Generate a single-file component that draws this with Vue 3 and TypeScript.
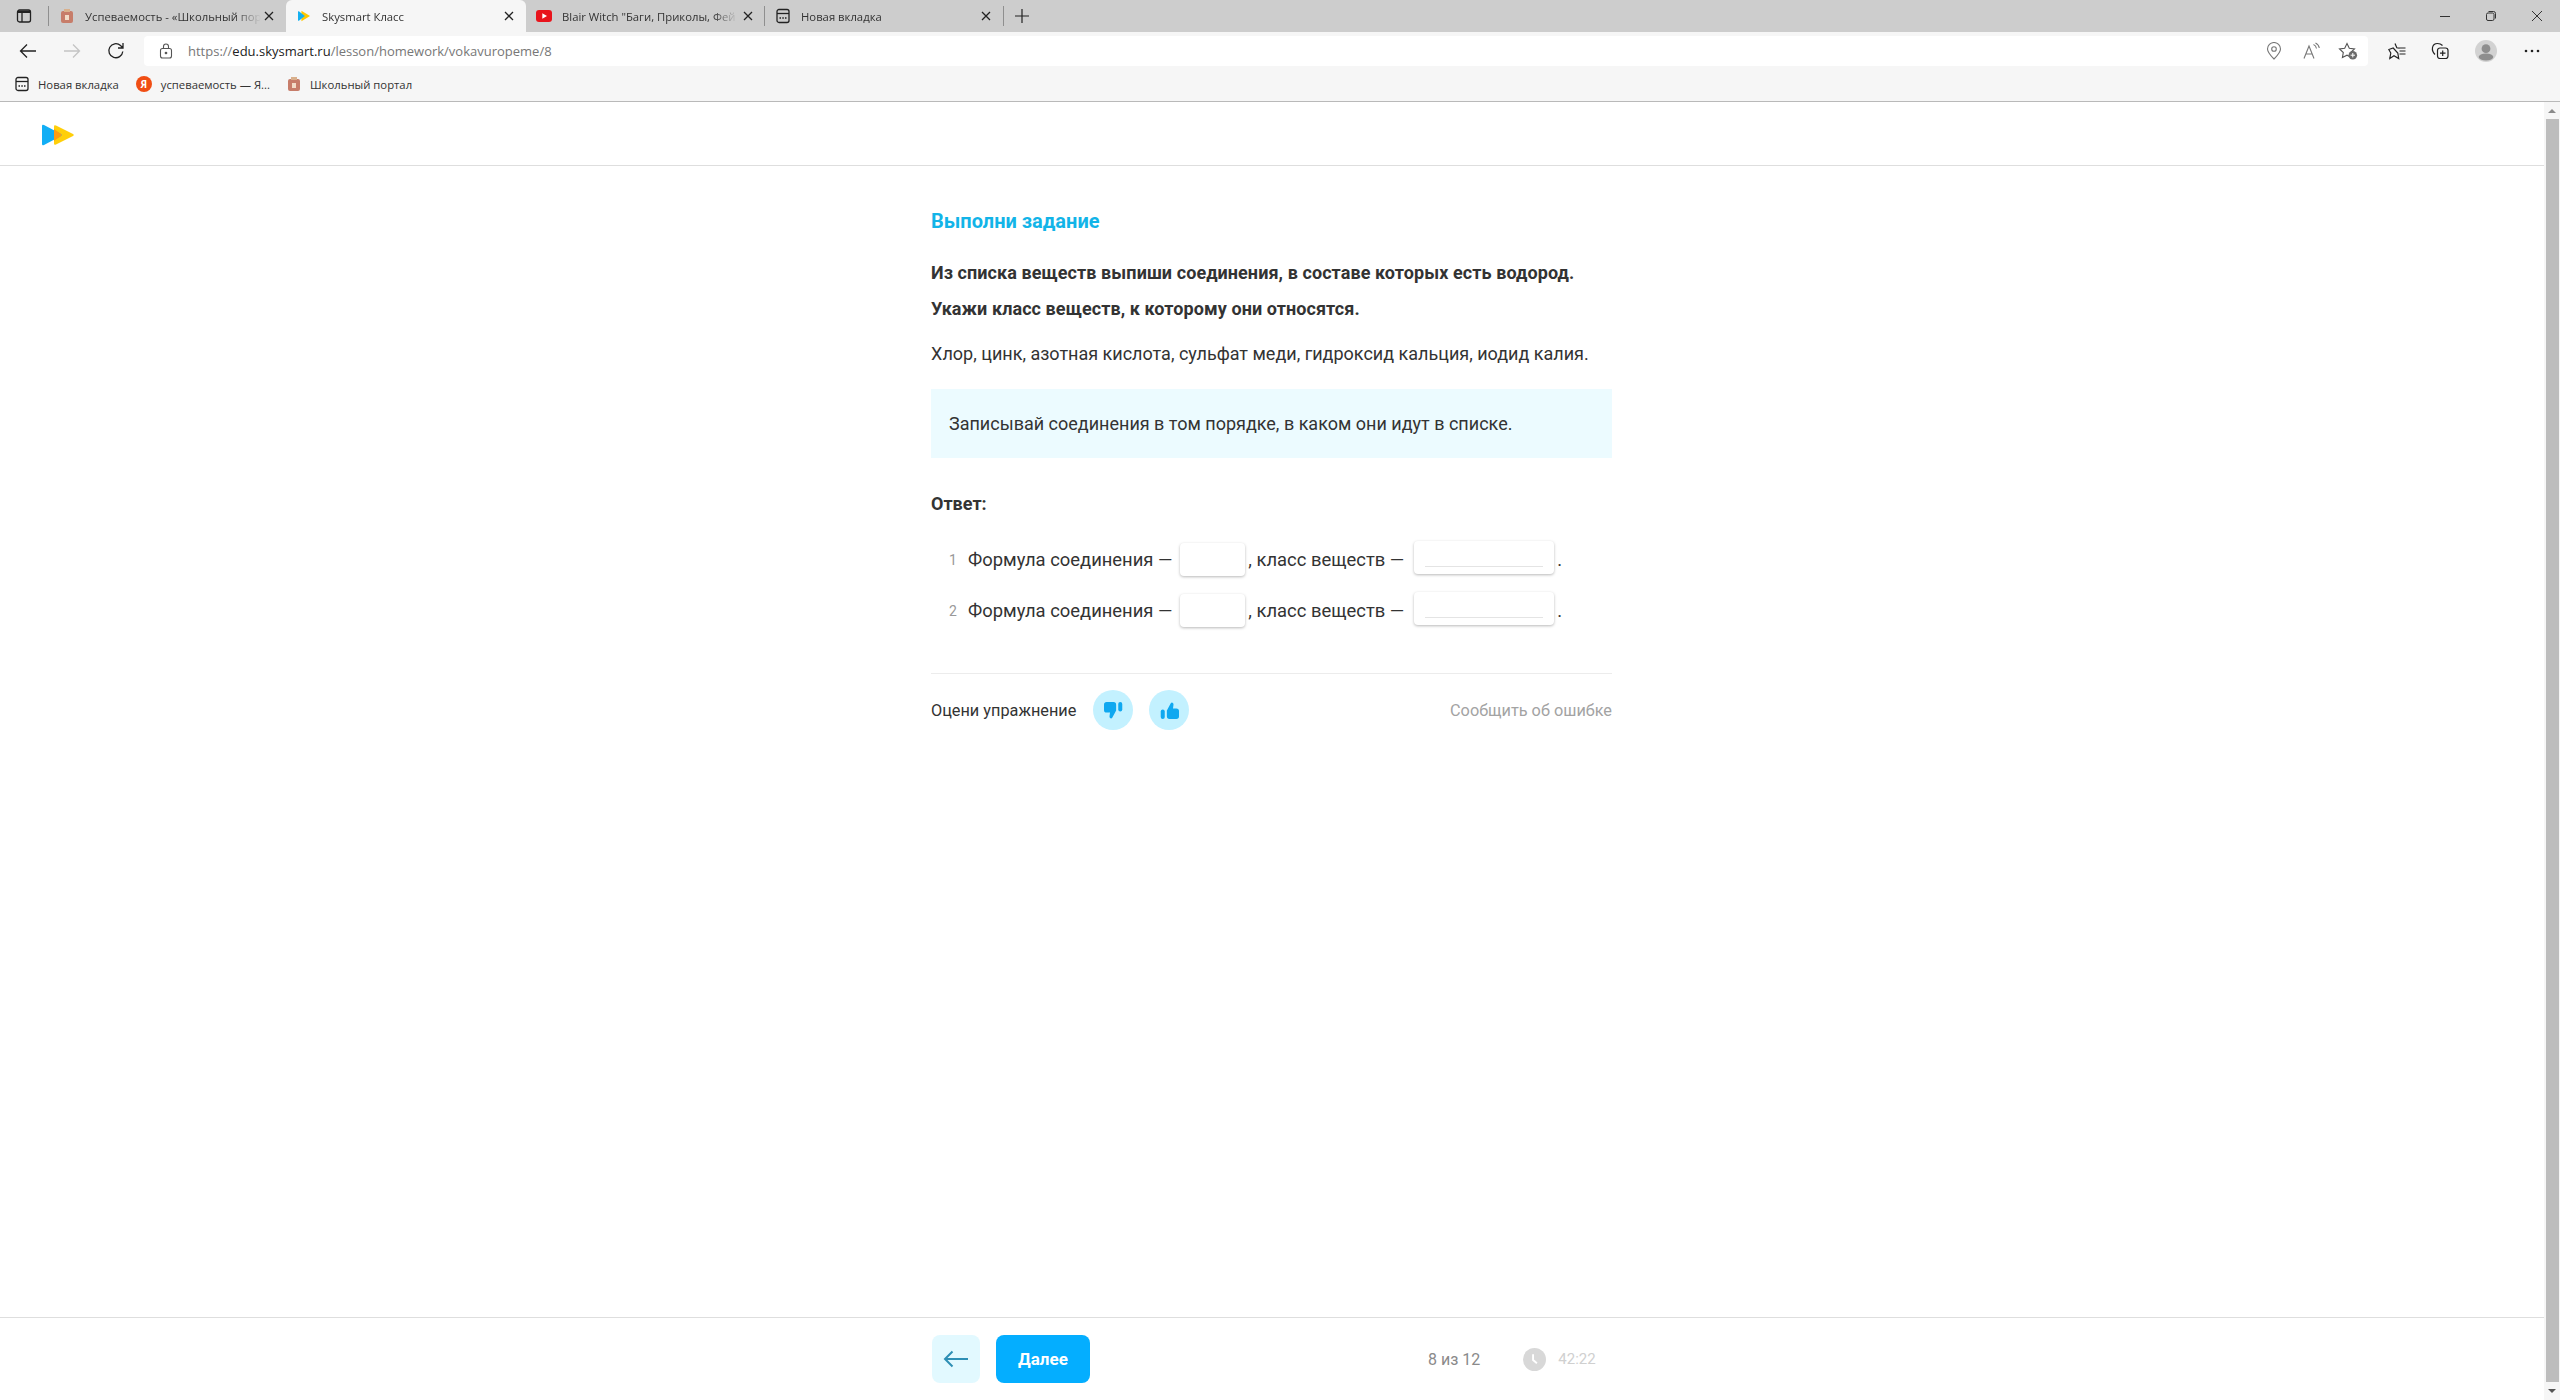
<script setup lang="ts">
interface Tab { title: string; icon: string; active?: boolean; width: number; sep?: boolean }
const tabs: Tab[] = [
  { title: 'Успеваемость - «Школьный пор', icon: 'portal', width: 237 },
  { title: 'Skysmart Класс', icon: 'sky', active: true, width: 240 },
  { title: 'Blair Witch "Баги, Приколы, Фей', icon: 'yt', width: 239, sep: true },
  { title: 'Новая вкладка', icon: 'new', width: 238 },
]
const rows = [1, 2]
</script>

<template>
  <div class="page">
    <div class="tabbar">
      <svg class="tabs-ico" width="16" height="16" viewBox="0 0 16 16" fill="none" stroke="#222" stroke-width="1.3"><rect x="1.500" y="2" width="13" height="12" rx="2"/><path d="M6 5v9"/><path d="M2 2.600h12v2.400H2z" fill="#222" stroke="none"/></svg>
      <span class="tab-sep"></span>
      <div v-for="t in tabs" :key="t.title" class="tab" :class="{ active: t.active, 'sep-r': t.sep }" :style="{ width: t.width + 'px' }">
        <span class="fav">
          <svg v-if="t.icon === 'portal'" width="12" height="16" viewBox="0 0 12 16"><rect x="0" y="3" width="12" height="12" rx="2" fill="#c77d6a"/><rect x="3" y="1" width="6" height="3" fill="#d9b08c"/><rect x="4" y="7" width="4" height="5" fill="#f2dcc8"/></svg>
          <svg v-else-if="t.icon === 'sky'" width="14" height="12" viewBox="0 0 16 14"><path d="M5 1l10 6-10 6z" fill="#ffc800"/><path d="M1 2q0-1 1-.5L9 7l-7 5.500q-1 .5-1-.5z" fill="#15b0f0"/></svg>
          <svg v-else-if="t.icon === 'yt'" width="16" height="16" viewBox="0 0 16 16"><rect x="0" y="2" width="16" height="12" rx="3" fill="#e8141c"/><path d="M6.300 5.300L11 8l-4.700 2.700z" fill="#fff"/></svg>
          <svg v-else width="14" height="16" viewBox="0 0 14 16" fill="none" stroke="#222" stroke-width="1.300"><rect x="1" y="1.500" width="12" height="13" rx="2"/><path d="M1 5.500h12"/><path d="M3.500 10h1.500M6.300 10h1.500M9 10h1.500" stroke-width="1.500"/></svg>
        </span>
        <span class="tab-title">{{ t.title }}</span>
        <svg class="tab-x" width="10" height="10" viewBox="0 0 10 10" stroke="#222" stroke-width="1.300"><path d="M1 1l8 8M9 1l-8 8"/></svg>
      </div>
      <span class="tab-sep plus-sep"></span>
      <svg class="plus" width="14" height="14" viewBox="0 0 14 14" stroke="#222" stroke-width="1.200"><path d="M7 0v14M0 7h14"/></svg>
      <div class="win">
        <svg width="12" height="12" viewBox="0 0 12 12" stroke="#333"><path d="M1 6.500h10"/></svg>
        <svg width="12" height="12" viewBox="0 0 12 12" fill="none" stroke="#333"><rect x="1.500" y="3" width="7.500" height="7.500" rx="1.500"/><path d="M3.500 1.500h5a2 2 0 0 1 2 2v5"/></svg>
        <svg width="12" height="12" viewBox="0 0 12 12" stroke="#333"><path d="M1 1l10 10M11 1L1 11"/></svg>
      </div>
    </div>

    <div class="toolbar">
      <svg class="nav-ico" width="18" height="18" viewBox="0 0 18 18" fill="none" stroke="#222" stroke-width="1.300"><path d="M17 9H1.500M8 2.500L1.500 9 8 15.500"/></svg>
      <svg class="nav-ico" width="18" height="18" viewBox="0 0 18 18" fill="none" stroke="#c4c4c4" stroke-width="1.300"><path d="M1 9h15.500M10 2.500L16.500 9 10 15.500"/></svg>
      <svg class="nav-ico" width="18" height="18" viewBox="0 0 18 18" fill="none" stroke="#222" stroke-width="1.300"><path d="M15.800 9.500A7 7 0 1 1 13.500 3.500L16 6M16 1v5h-5"/></svg>
      <div class="address">
        <svg class="lock" width="14" height="16" viewBox="0 0 14 16" fill="none" stroke="#555" stroke-width="1.100"><rect x="1.500" y="5.500" width="11" height="9.500" rx="2"/><path d="M4.500 5.500V3.500a2.500 2.500 0 0 1 5 0v2"/><circle cx="7" cy="10" r=".8" fill="#555"/></svg>
        <span class="url"><span class="dim">https://</span>edu.skysmart.ru<span class="dim">/lesson/homework/vokavuropeme/8</span></span>
        <div class="addr-icons">
          <svg width="16" height="18" viewBox="0 0 16 18" fill="none" stroke="#777" stroke-width="1.100"><path d="M8 17C4 13 1.500 10 1.500 7a6.500 6.500 0 0 1 13 0c0 3-2.500 6-6.500 10z"/><circle cx="8" cy="7" r="2.300"/></svg>
          <svg class="read" width="18" height="18" viewBox="0 0 18 18" fill="none" stroke="#777" stroke-width="1.100"><path d="M1 16.500L6 4l5 12.500M2.800 12h6.400M10.500 2.500q2.500 1 3 4M12.500 1q3.200 1.500 3.800 5"/></svg>
          <svg class="star-add" width="20" height="18" viewBox="0 0 20 18"><path d="M9 1.500l2.300 4.700 5.200.7-3.800 3.600.9 5.100L9 13.200l-4.600 2.400.9-5.100-3.800-3.600 5.200-.7z" fill="none" stroke="#555" stroke-width="1.100"/><circle cx="14.800" cy="13.200" r="4.300" fill="#6b6b6b"/><path d="M14.800 11v4.400M12.600 13.200H17" stroke="#fff"/></svg>
        </div>
      </div>
      <div class="tool-icons">
        <svg width="18" height="18" viewBox="0 0 18 18" fill="none" stroke="#222" stroke-width="1.200"><path d="M7 1.500l1.800 4.300 2.700.3M9.800 11l.9 5.500L6 13.800 1.800 16.500l1-5.500L.8 7.500 5.200 6zM11.500 6h6M11.500 9h6M11.500 12h6"/></svg>
        <svg class="coll" width="18" height="18" viewBox="0 0 18 18" fill="none" stroke="#222" stroke-width="1.200"><rect x="6.500" y="6" width="10.500" height="10.500" rx="2.500"/><path d="M11.700 8.500v5.500M9 11.200h5.500M4 12.500C2 10.500 1 8.500 1.500 5.500 2 3 4 1.500 6.500 1.500c2 0 3.500.5 5 2"/></svg>
        <svg class="prof" width="22" height="22" viewBox="0 0 24 24"><circle cx="12" cy="12" r="12" fill="#d2d2d2"/><circle cx="12" cy="9.500" r="4.800" fill="#8e8e8e"/><ellipse cx="12" cy="18.500" rx="8" ry="3.900" fill="#8e8e8e"/></svg>
        <svg class="dots" width="16" height="4" viewBox="0 0 16 4" fill="#222"><circle cx="2" cy="2" r="1.300"/><circle cx="8" cy="2" r="1.300"/><circle cx="14" cy="2" r="1.300"/></svg>
      </div>
    </div>

    <div class="bookmarks">
      <div class="bm">
        <svg width="14" height="16" viewBox="0 0 14 16" fill="none" stroke="#222" stroke-width="1.300"><rect x="1" y="1.500" width="12" height="13" rx="2"/><path d="M1 5.500h12"/><path d="M3.500 10h1.500M6.300 10h1.500M9 10h1.500" stroke-width="1.500"/></svg>
        <span>Новая вкладка</span>
      </div>
      <div class="bm">
        <span class="ya">Я</span>
        <span>успеваемость — Я...</span>
      </div>
      <div class="bm">
        <svg width="14" height="16" viewBox="0 0 14 16"><rect x="1" y="3" width="12" height="12" rx="2" fill="#c77d6a"/><rect x="4" y="1" width="6" height="3" fill="#d9b08c"/><rect x="5" y="7" width="4" height="5" fill="#f2dcc8"/></svg>
        <span>Школьный портал</span>
      </div>
    </div>

    <div class="viewport">
      <div class="content-col">
        <header class="site-head">
          <svg width="32" height="22" viewBox="0 0 32 22">
            <path d="M12 2.500q0-2 2-1L31 10q1.500 1 0 2L14 20.500q-2 1-2-1z" fill="#ffcf0a"/>
            <path d="M0 2q0-2 2-1l17 9q1.500 1 0 2L2 21q-2 1-2-1z" fill="#12aef5"/>
            <path d="M12 5l7 5q1.500 1 0 2l-7 5z" fill="#ff9c12"/>
          </svg>
        </header>

        <main class="main">
          <div class="lesson">
            <h2 class="title">Выполни задание</h2>
            <p class="strong first">Из списка веществ выпиши соединения, в составе которых есть водород.</p>
            <p class="strong second">Укажи класс веществ, к которому они относятся.</p>
            <p class="list">Хлор, цинк, азотная кислота, сульфат меди, гидроксид кальция, иодид калия.</p>
            <div class="note">Записывай соединения в том порядке, в каком они идут в списке.</div>
            <div class="answer-label">Ответ:</div>
            <ol class="answers">
              <li v-for="n in rows" :key="n" class="answer">
                <span class="num">{{ n }}</span>
                <span>Формула соединения —</span>
                <span class="inp small"></span>
                <span class="after">, класс веществ —</span>
                <span class="inp big"><span class="line"></span></span>
                <span class="dot">.</span>
              </li>
            </ol>
            <div class="rate">
              <span class="rate-label">Оцени упражнение</span>
              <span class="circle">
                <svg width="19" height="19" viewBox="0 0 18 18" fill="#0fa8f0"><path d="M0 3.500A2.500 2.500 0 0 1 2.500 1H9a2.500 2.500 0 0 1 2.500 2.500v5.500L7.800 15.800q-.6 1-1.700.6-1-.5-.9-1.700L5.700 11H2.500A2.500 2.500 0 0 1 0 8.500z"/><rect x="13.500" y="1" width="3.800" height="9" rx="1.900"/></svg>
              </span>
              <span class="circle second-c">
                <svg width="19" height="19" viewBox="0 0 18 18" fill="#0fa8f0"><path d="M18 14.500a2.500 2.500 0 0 1-2.500 2.500H9a2.500 2.500 0 0 1-2.500-2.500V9L10.200 2.200q.6-1 1.700-.6 1 .5.900 1.700L12.300 7h3.200A2.500 2.500 0 0 1 18 9.500z"/><rect x=".7" y="8" width="3.800" height="9" rx="1.900"/></svg>
              </span>
              <span class="report">Сообщить об ошибке</span>
            </div>
          </div>
        </main>

        <footer class="foot">
          <div class="foot-inner">
            <button class="back">
              <svg width="26" height="18" viewBox="0 0 26 18" fill="none" stroke="#2e8fb5" stroke-width="2"><path d="M25 9H2M9.500 1.500L2 9l7.500 7.500"/></svg>
            </button>
            <button class="next">Далее</button>
            <span class="count">8 из 12</span>
            <svg class="clock" width="23" height="23" viewBox="0 0 24 24"><circle cx="12" cy="12" r="12" fill="#d8d8d8"/><path d="M10.500 6.500v6l4 3.500" fill="none" stroke="#fff" stroke-width="2"/></svg>
            <span class="timer">42:22</span>
          </div>
        </footer>
      </div>

      <div class="scrollbar">
        <span class="arrow up"></span>
        <span class="thumb"></span>
        <span class="arrow down"></span>
      </div>
    </div>
  </div>
</template>

<style scoped>
.page { width: 2560px; height: 1400px; display: flex; flex-direction: column; overflow: hidden; background: #fff; font-family: "Open Sans", "Noto Sans", sans-serif; color: #222; }
.tabbar { height: 32px; background: #cdcdcd; display: flex; align-items: center; font-size: 11.3px; flex: none; }
.tabs-ico { margin-left: 16px; }
.tab-sep { width: 1px; height: 20px; background: #8f8f8f; margin-left: 16px; flex: none; }
.tab { height: 32px; display: flex; align-items: center; padding: 0 12px 0 10px; box-sizing: border-box; position: relative; color: #444; flex: none; }
.tab.active { background: #f6f6f6; border-radius: 6px 6px 0 0; }
.tab.sep-r::after { content: ""; position: absolute; right: 0; top: 6px; height: 20px; width: 1px; background: #8f8f8f; }
.fav { width: 16px; height: 16px; display: flex; align-items: center; justify-content: center; margin-right: 10px; flex: none; }
.tab-title { flex: 1; white-space: nowrap; color: #333; -webkit-mask-image: linear-gradient(to right, #000 150px, transparent 176px); mask-image: linear-gradient(to right, #000 150px, transparent 176px); }
.tab-x { flex: none; }
.plus-sep { margin-left: 0; }
.plus { margin-left: 11px; }
.win { margin-left: auto; display: flex; gap: 34px; padding-right: 17px; align-items: center; }
.toolbar { height: 37px; background: #f6f6f6; display: flex; align-items: center; flex: none; }
.nav-ico { margin-left: 26px; flex: none; }
.nav-ico:first-child { margin-left: 19px; }
.address { margin-left: 19px; width: 2224px; height: 30px; background: #fff; border-radius: 4px; display: flex; align-items: center; box-sizing: border-box; padding-left: 15px; flex: none; }
.url { margin-left: 15px; font-size: 13px; color: #222; }
.dim { color: #777; }
.addr-icons { margin-left: auto; display: flex; align-items: center; padding-right: 10px; }
.read { margin-left: 21px; }
.star-add { margin-left: 17px; }
.tool-icons { display: flex; align-items: center; margin-left: 20px; }
.coll { margin-left: 25px; }
.prof { margin-left: 26px; }
.dots { margin-left: 27px; }
.bookmarks { height: 33px; box-sizing: border-box; background: #f6f6f6; display: flex; align-items: center; padding: 0 0 2px 15px; gap: 17px; font-size: 11.3px; border-bottom: 1px solid #b9b9b9; flex: none; color: #333; }
.bm { display: flex; align-items: center; gap: 9px; }
.ya { width: 16px; height: 16px; border-radius: 50%; background: #f04e14; color: #fff; font-size: 10px; font-weight: 700; display: flex; align-items: center; justify-content: center; }
.viewport { flex: 1; display: flex; min-height: 0; }
.content-col { flex: 1; display: flex; flex-direction: column; min-width: 0; }
.site-head { height: 64px; box-sizing: border-box; border-bottom: 1px solid #dedede; display: flex; align-items: center; padding: 2px 0 0 42px; flex: none; }
.main { flex: 1; display: flex; justify-content: center; min-height: 0; }
.lesson { width: 681px; margin-left: -1px; font-family: Roboto, "Noto Sans", sans-serif; font-size: 18px; }
.title { margin: 42px 0 0; font-size: 20px; line-height: 26px; font-weight: 700; color: #12b4e8; }
.strong { margin: 0; font-weight: 700; color: #333; line-height: 26px; letter-spacing: .08px; }
.first { margin-top: 26px; }
.second { margin-top: 10px; }
.list { margin: 19px 0 0; line-height: 26px; color: #333; }
.note { margin-top: 22px; height: 69px; background: #ecfbff; display: flex; align-items: center; padding: 0 0 1px 18px; box-sizing: border-box; color: #333; }
.answer-label { margin-top: 33px; font-weight: 700; line-height: 26px; color: #333; }
.answers { list-style: none; margin: 26px 0 0; padding: 0; display: flex; flex-direction: column; gap: 18px; }
.answer { display: flex; align-items: center; height: 33px; color: #333; white-space: pre; font-size: 18.4px; }
.num { width: 20px; text-align: center; margin-left: 12px; margin-right: 5px; color: #999; font-size: 14px; }
.inp { display: block; background: #fff; border-radius: 4px; box-shadow: 0 1px 3px rgba(0,0,0,.28); box-sizing: border-box; position: relative; }
.small { width: 65px; height: 33px; margin-left: 8px; }
.big { width: 140px; height: 33px; margin-left: 10px; margin-bottom: 4px; }
.line { position: absolute; left: 11px; right: 11px; bottom: 7px; height: 1px; background: #e4e4e4; }
.after { margin-left: 3px; }
.dot { margin-left: 3px; }
.rate { margin-top: 46px; border-top: 1px solid #ececec; padding-top: 16px; display: flex; align-items: center; height: 40px; }
.rate-label { font-size: 16.3px; color: #333; }
.circle { width: 40px; height: 40px; border-radius: 50%; background: #c3f1ff; display: flex; align-items: center; justify-content: center; margin-left: 17px; }
.second-c { margin-left: 16px; }
.report { margin-left: auto; font-size: 16.3px; color: #a3a3a3; }
.foot { height: 83px; box-sizing: border-box; border-top: 1px solid #dedede; display: flex; justify-content: center; flex: none; }
.foot-inner { width: 681px; margin-left: -1px; display: flex; align-items: center; font-family: Roboto, "Noto Sans", sans-serif; }
.back { width: 48px; height: 48px; border: 0; border-radius: 8px; background: #e2f9ff; display: flex; align-items: center; justify-content: center; padding: 0; margin-left: 1px; }
.next { width: 94px; height: 48px; margin-left: 16px; border: 0; border-radius: 8px; background: #04aeff; color: #fff; font-family: inherit; font-size: 17px; font-weight: 700; }
.count { margin-left: 338px; font-size: 16px; color: #8a8a8a; }
.clock { margin-left: 43px; }
.timer { margin-left: 12px; font-size: 15px; color: #d0d0d0; }
.scrollbar { width: 16px; flex: none; background: #f6f6f6; display: flex; flex-direction: column; align-items: center; box-sizing: border-box; }
.arrow { width: 0; height: 0; border-left: 4px solid transparent; border-right: 4px solid transparent; flex: none; }
.up { border-bottom: 4px solid #8a8a8a; margin: 7px 0 6px; }
.down { border-top: 4px solid #555; margin: 7px 0 7px; }
.thumb { flex: 1; width: 13px; background: #bdbdbd; }
</style>
